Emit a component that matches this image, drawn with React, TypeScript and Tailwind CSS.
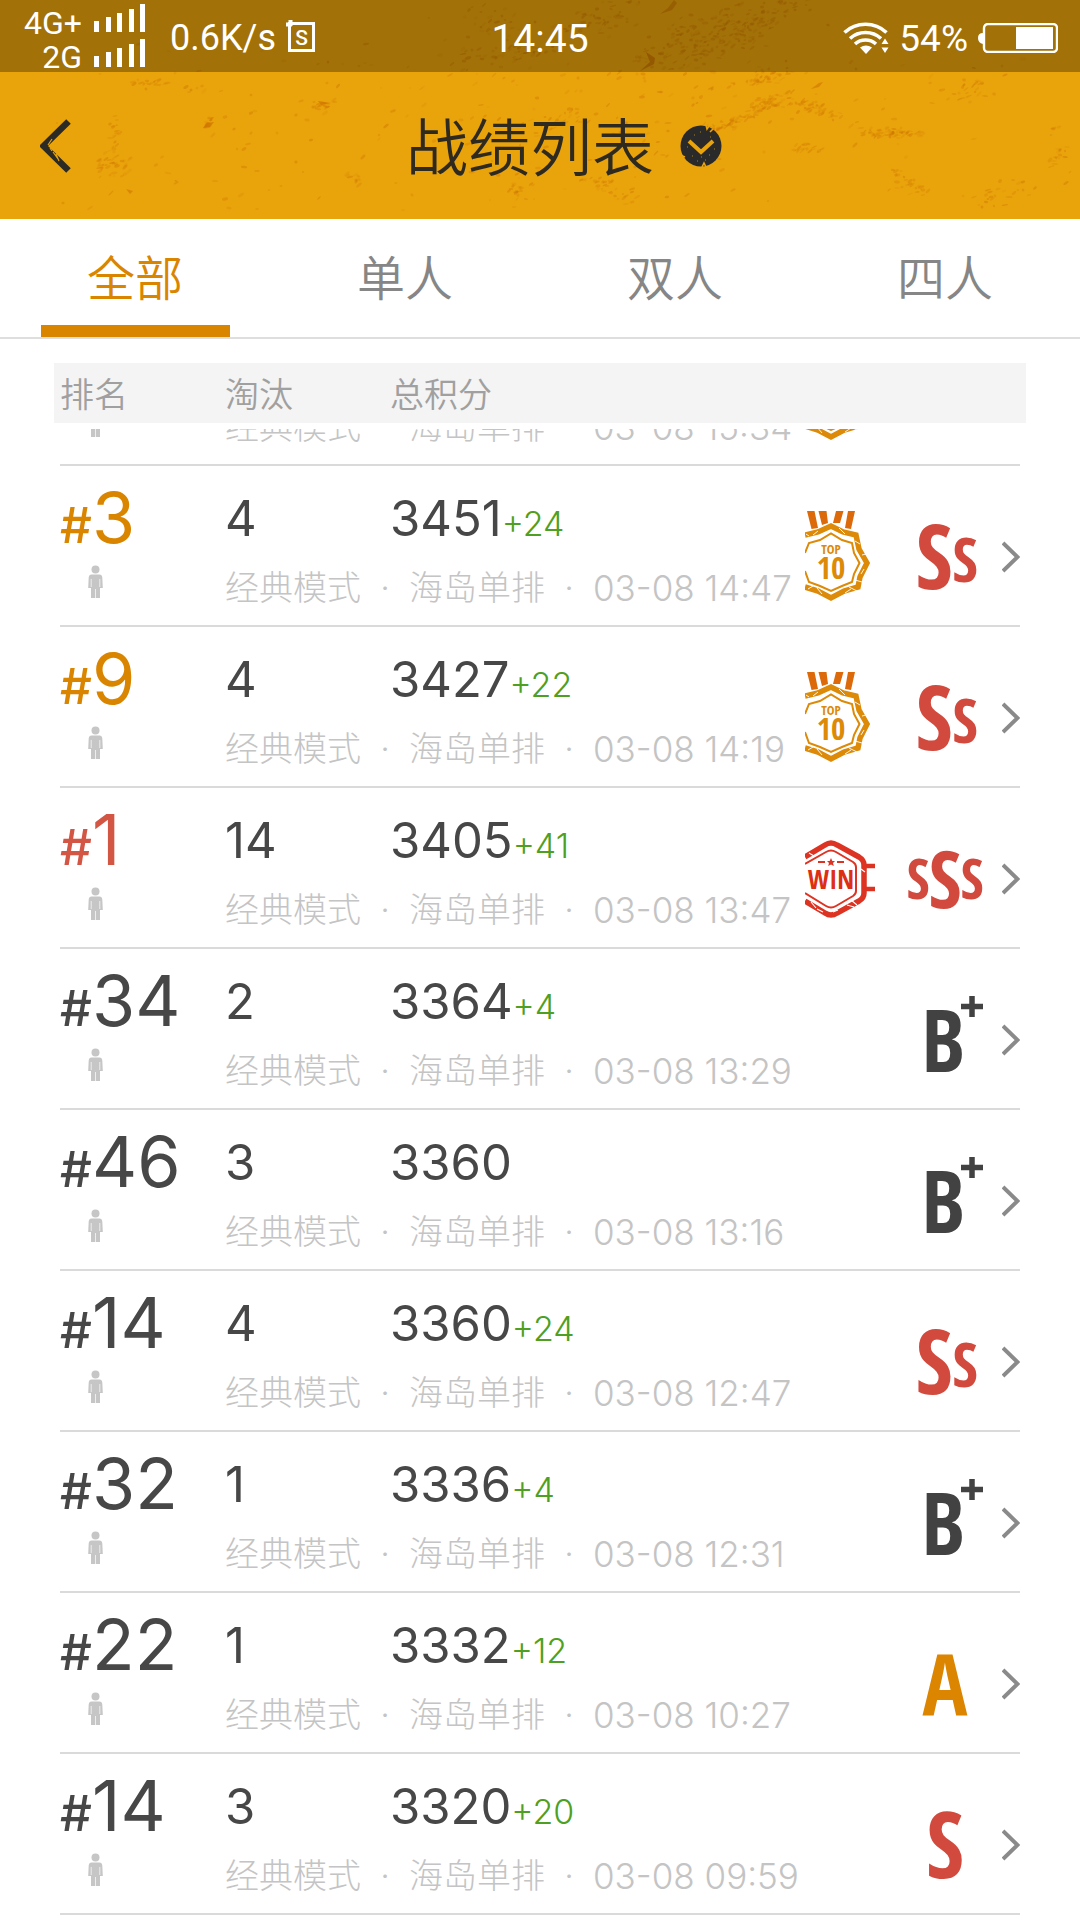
import React from "react";

type Badge = "top10" | "win";
type Grade = "SSS" | "SS" | "S" | "A" | "B+";

interface Match {
  rank?: number;
  kills?: number;
  score?: number;
  delta?: string;
  time: string;
  badge?: Badge;
  grade: Grade;
}

const matches: Match[] = [
  { time: "03-08 15:34", badge: "top10", grade: "SS" },
  { rank: 3, kills: 4, score: 3451, delta: "+24", time: "03-08 14:47", badge: "top10", grade: "SS" },
  { rank: 9, kills: 4, score: 3427, delta: "+22", time: "03-08 14:19", badge: "top10", grade: "SS" },
  { rank: 1, kills: 14, score: 3405, delta: "+41", time: "03-08 13:47", badge: "win", grade: "SSS" },
  { rank: 34, kills: 2, score: 3364, delta: "+4", time: "03-08 13:29", grade: "B+" },
  { rank: 46, kills: 3, score: 3360, time: "03-08 13:16", grade: "B+" },
  { rank: 14, kills: 4, score: 3360, delta: "+24", time: "03-08 12:47", grade: "SS" },
  { rank: 32, kills: 1, score: 3336, delta: "+4", time: "03-08 12:31", grade: "B+" },
  { rank: 22, kills: 1, score: 3332, delta: "+12", time: "03-08 10:27", grade: "A" },
  { rank: 14, kills: 3, score: 3320, delta: "+20", time: "03-08 09:59", grade: "S" },
];

const tabs = ["全部", "单人", "双人", "四人"];

/* Worn paint: clusters of small marks, [centre x, centre y, spread x, spread y, slope, count] */
const clusters: number[][] = [
  [700, 40, 70, 30, -0.4, 150],
  [760, 20, 60, 18, -0.5, 90],
  [725, 125, 28, 7, -0.2, 45],
  [765, 105, 30, 10, -0.4, 60],
  [815, 108, 28, 7, 0.25, 45],
  [890, 133, 36, 6, 0, 60],
  [760, 78, 40, 12, -0.3, 50],
  [600, 20, 60, 22, -0.3, 60],
  [560, 120, 30, 8, -0.4, 25],
  [610, 190, 30, 14, 0.3, 30],
  [805, 148, 16, 5, 0, 14],
  [910, 185, 22, 12, 0.4, 24],
  [500, 55, 60, 16, -0.1, 40],
  [490, 20, 30, 18, 0, 25],
  [110, 165, 28, 14, 0.1, 36],
  [115, 135, 8, 28, 0, 20],
  [160, 86, 60, 6, 0.1, 24],
  [320, 105, 20, 6, 0.1, 14],
  [207, 124, 6, 5, -0.8, 16],
  [520, 190, 14, 20, 0.3, 20],
  [355, 180, 16, 8, 0.2, 10],
  [970, 90, 40, 16, -0.3, 26],
  [1000, 195, 40, 16, -0.2, 26],
  [1060, 150, 14, 40, 0, 22],
  [540, 110, 540, 110, 0, 260],
];

function makeSpeckles() {
  let seed = 7;
  const rnd = () => {
    seed = (seed * 16807) % 2147483647;
    return seed / 2147483647;
  };
  const out: { x: number; y: number; rx: number; ry: number; a: number; o: number }[] = [];
  clusters.forEach(([cx, cy, sx, sy, slope, n]) => {
    for (let i = 0; i < n; i++) {
      const u = rnd() + rnd() - 1;
      const v = rnd() + rnd() - 1;
      out.push({
        x: Math.round(cx + u * sx),
        y: Math.round(cy + v * sy + u * sx * slope),
        rx: 1 + rnd() * 2.4,
        ry: 0.6 + rnd() * 1,
        a: Math.round(-50 + rnd() * 60),
        o: 0.1 + rnd() * 0.34,
      });
    }
  });
  return out;
}

const speckles = makeSpeckles();

function Grunge() {
  return (
    <svg className="absolute inset-0 h-full w-full" viewBox="0 0 1080 219" preserveAspectRatio="xMidYMid slice" aria-hidden="true">
      {speckles.map((s, i) => (
        <ellipse key={i} cx={s.x} cy={s.y} rx={s.rx} ry={s.ry} fill="#cf7400" opacity={s.o} transform={`rotate(${s.a} ${s.x} ${s.y})`} />
      ))}
      <path d="M640 71 L650 62 L646 52 L655 58 L654 64 Z" fill="#cf7400" opacity="0.8" />
      <path d="M660 14 L668 8 L674 0 L677 3 L672 10 Z" fill="#cf7400" opacity="0.6" />
      <path d="M203 128 L207 123 L214 122 L210 127 Z" fill="#cf7400" opacity="0.7" />
      <path d="M318 101 L331 103 L321 105 Z" fill="#cf7400" opacity="0.7" />
      <path d="M811 89 L819 83 L823 82 L819 87 Z" fill="#cf7400" opacity="0.6" />
      <path d="M126 189 L133 191 L130 194 Z" fill="#cf7400" opacity="0.6" />
    </svg>
  );
}

function SignalBars() {
  return (
    <svg className="block h-7 w-[52px]" viewBox="0 0 52 28" fill="#fff" aria-hidden="true">
      <rect x="0" y="17" width="5" height="11" />
      <rect x="12" y="13" width="5" height="15" />
      <rect x="23" y="9" width="5" height="19" />
      <rect x="35" y="5" width="5" height="23" />
      <rect x="46" y="0" width="5" height="28" />
    </svg>
  );
}

function StatusBar() {
  return (
    <div className="relative grid h-[72px] grid-cols-[1fr_auto_1fr] bg-black/30 pr-[22px] pl-[22px] font-['Roboto','Noto_Sans_CJK_SC',sans-serif] text-white">
      <div className="flex">
        <div className="w-[60px] pt-1.5 text-right text-[32px] leading-[34px]">
          <div>4G+</div>
          <div>2G</div>
        </div>
        <div className="ml-3 flex flex-col gap-[7px] pt-1">
          <SignalBars />
          <SignalBars />
        </div>
        <div className="ml-6 pt-0.5 text-[36px] leading-[72px]">0.6K/s</div>
        <svg className="mt-5 ml-2.5 h-8 w-[30px]" viewBox="0 0 30 32" fill="none" stroke="#fff" strokeWidth="3" aria-hidden="true">
          <path d="M3.500 3.500H27.500V30.500H3.500Z" />
          <path d="M0 4.500H6M4.500 0V6" strokeWidth="4" />
          <text x="15.500" y="24.500" textAnchor="middle" fontSize="21" fontWeight="500" fill="#fff" stroke="none">S</text>
        </svg>
      </div>
      <div className="pt-0.5 text-[39px] leading-[74px]">14:45</div>
      <div className="flex items-center justify-end">
        <svg className="h-8 w-[46px]" viewBox="0 0 46 32" fill="none" stroke="#fff" strokeWidth="3.600" aria-hidden="true">
          <path d="M1.500 10.500A31 31 0 0 1 43.500 10.500" />
          <path d="M7 16.500A23 23 0 0 1 38 16.500" />
          <path d="M12 22A16 16 0 0 1 33 22" />
          <path d="M17 25.500Q23 21.500 29 25.500L23 32Z" fill="#fff" stroke="none" />
          <path d="M42 16.500L45.500 22H38.500ZM42 31L45.500 25.500H38.500Z" fill="#fff" stroke="none" />
        </svg>
        <span className="ml-2.5 pt-0.5 text-[37px] leading-[72px]">54%</span>
        <svg className="ml-2.5 h-[30px] w-20" viewBox="0 0 80 30" fill="none" aria-hidden="true">
          <path d="M5 10Q0 10 0 15T5 21Z" fill="#fff" />
          <rect x="6" y="1" width="73" height="28" rx="4" stroke="#fff" strokeWidth="2.400" />
          <rect x="38" y="4" width="37" height="22" fill="#fff" />
        </svg>
      </div>
    </div>
  );
}

function TitleBar() {
  return (
    <header className="relative flex h-[147px] items-center pr-6 pl-10 text-[#2e2a20]">
      <button type="button" aria-label="返回" className="h-14 w-8">
        <svg className="h-14 w-8" viewBox="0 0 32 56" fill="none" aria-hidden="true">
          <path d="M28.500 3.500L3.500 28L28.500 52.500" stroke="#2b2a24" strokeWidth="6.500" />
          <path d="M8 27L12 21M13 34L18 41M16 36L19 43M10 30L12 33" stroke="#e9a30b" strokeWidth="1.200" />
        </svg>
      </button>
      <div className="flex flex-1 items-center justify-center gap-[26px]">
        <h1 className="pb-1 font-['Noto_Sans_CJK_SC',sans-serif] text-[62px] leading-[76px] font-[350]">战绩列表</h1>
        <button type="button" aria-label="选择列表" className="h-[42px] w-[42px]">
          <svg className="h-[42px] w-[42px]" viewBox="0 0 42 42" aria-hidden="true">
            <circle cx="21" cy="21" r="20.500" fill="#2b2a2a" />
            <path d="M9 16L21 27L33 16" fill="none" stroke="#e9a30b" strokeWidth="4" />
            <path d="M26 0L27 4L29 1M0 30L5 32M22 42L24 38L26 42M33 4L30 7" fill="none" stroke="#e9a30b" strokeWidth="1.600" />
            <path d="M14 10h1M20 7h1M29 30h1M12 31h1M25 35h1M17 36h1M34 24h1M7 22h1M21 32h1M30 12h1" stroke="#80651f" strokeWidth="1.500" />
          </svg>
        </button>
      </div>
    </header>
  );
}

function Tabs() {
  return (
    <nav className="grid grid-cols-4 border-b-2 border-[#dedede]" role="tablist">
      {tabs.map((t, i) => (
        <button
          key={t}
          type="button"
          role="tab"
          aria-selected={i === 0}
          className={
            i === 0
              ? "flex flex-col items-center text-[#da8500]"
              : "flex flex-col items-center text-[#868686]"
          }
        >
          <span className="pt-1.5 font-['Noto_Sans_CJK_SC',sans-serif] text-[48px] leading-[100px] font-[350]">{t}</span>
          <span className={i === 0 ? "h-3 w-[70%] bg-[#da8500]" : "h-3 w-[70%]"} />
        </button>
      ))}
    </nav>
  );
}

function Person() {
  return (
    <svg className="ml-7 block h-[34px] w-[15px]" viewBox="0 0 15 34" fill="#c6c6c6" aria-hidden="true">
      <circle cx="7.500" cy="4.500" r="4" />
      <path d="M3.500 9.500H11.500Q14 9.500 14.300 12.500L14.800 23H12V33H3V23H0.200L0.700 12.500Q1 9.500 3.500 9.500Z" />
      <path d="M3.200 14V22M11.800 14V22M7.500 24V33" stroke="#fff" strokeWidth="0.700" />
    </svg>
  );
}

function TopTen() {
  return (
    <svg className="h-[92px] w-[72px]" viewBox="0 0 72 92" fill="none" aria-hidden="true">
      <path d="M2 0H9.500L13 17L6.500 18ZM13.500 0H21.500L23 12L17 14ZM31 0H38.500L35 12H28ZM43 0H50L46 18L40 17Z" fill="#dd6a0a" />
      <g stroke="#dc8a08">
        <path d="M0 24L13 21L26 15L38 21L51 24L54 38L62 52L55 66L53 76L39 80L26 87L13 80L0 76" strokeWidth="5.500" />
        <path d="M0 42L4 32L15 29L26 22.500L37 29L47 32L49 42L54.500 52L49 63L47 71L37 75L26 80L15 75L4 71L0 60" strokeWidth="2" />
      </g>
      <path d="M8 24L13 20M34 17L40 23M50 30L55 33M57 44L61 43M50 69L57 71M40 82L46 78M44 76L52 80M12 77L17 83M3 78L8 75M1 23L4 25M59 58L56 63" stroke="#fff" strokeWidth="0.900" />
      <g fill="#dc8a08" textAnchor="middle" className="font-['Open_Sans_Condensed','Open_Sans',sans-serif] font-bold">
        <text x="26" y="43" fontSize="13">TOP</text>
        <text x="26" y="68" fontSize="31">10</text>
      </g>
    </svg>
  );
}

function Win() {
  return (
    <svg className="h-20 w-[72px]" viewBox="0 0 72 80" fill="none" stroke="#dd3322" aria-hidden="true">
      <path d="M0 18L20 6Q26 2 32 6L54 18Q59 21 59 26V54Q59 59 54 62L32 74Q26 78 20 74L0 62" strokeWidth="5.500" />
      <path d="M0 25L21 13Q26 10 31 13L48 23Q51 25 51 28V52Q51 55 48 57L31 67Q26 70 21 67L0 54" strokeWidth="2" />
      <path d="M61 27H70M61 50H70" strokeWidth="4.500" />
      <path d="M13 23H20M32 23H39" strokeWidth="2" />
      <path d="M26 19L27.300 22H30L28 24L28.800 27L26 25.400L23.200 27L24 24L22 22H24.700Z" fill="#dd3322" stroke="none" />
      <path d="M6 63L11 69M12 70L18 73M42 66L49 68M46 61L52 66M28 73L33 71M4 14L9 17M56 30L60 33" stroke="#fff" strokeWidth="1.100" />
      <text x="26" y="50" fontSize="27" textAnchor="middle" fill="#dc2f14" stroke="none" className="font-['Open_Sans_Condensed','Open_Sans',sans-serif] font-bold">WIN</text>
    </svg>
  );
}

const gradeParts: Record<Grade, { ch: string; x: number; y: number; size: number }[]> = {
  SSS: [
    { ch: "S", x: 13, y: 65, size: 56 },
    { ch: "S", x: 40, y: 74, size: 80 },
    { ch: "S", x: 67, y: 65, size: 56 },
  ],
  SS: [
    { ch: "S", x: 29, y: 77, size: 90 },
    { ch: "S", x: 60, y: 70, size: 62 },
  ],
  S: [{ ch: "S", x: 40, y: 78, size: 92 }],
  A: [{ ch: "A", x: 40, y: 76, size: 84 }],
  "B+": [{ ch: "B", x: 38, y: 77, size: 86 }],
};

const gradeFill: Record<Grade, string> = {
  SSS: "#d24a3e",
  SS: "#d24a3e",
  S: "#d24a3e",
  A: "#dc8500",
  "B+": "#424242",
};

function GradeMark({ grade }: { grade: Grade }) {
  return (
    <svg className="h-[90px] w-20 overflow-visible" viewBox="0 0 80 90" aria-label={grade} role="img">
      <g fill={gradeFill[grade]} textAnchor="middle" className="font-['Open_Sans_Condensed','Open_Sans',sans-serif] font-bold">
        {gradeParts[grade].map((p, i) => (
          <text key={i} x={p.x} y={p.y} fontSize={p.size}>{p.ch}</text>
        ))}
      </g>
      {grade === "B+" && (
        <path d="M67 1V22M56 11.500H78" stroke={gradeFill[grade]} strokeWidth="5.500" />
      )}
    </svg>
  );
}

function rankColor(rank: number) {
  if (rank === 1) return "text-[#d35645]";
  if (rank <= 10) return "text-[#da8500]";
  return "text-[#474747]";
}

function Row({ m }: { m: Match }) {
  return (
    <li className="border-b-2 border-[#dadada]">
      <a href="#match" className="grid h-[159px] grid-cols-[165px_1fr_auto]">
        <div className="pt-0.5">
          <div className={m.rank ? rankColor(m.rank) : ""}>
            <div className="h-[97px] text-[70px] leading-[100px] whitespace-nowrap">
              {m.rank && (
                <>
                  <span className="text-[50px] font-medium">#</span>
                  {m.rank}
                </>
              )}
            </div>
          </div>
          <Person />
        </div>
        <div>
          <div className="grid h-[102px] grid-cols-[165px_1fr] text-[49px] leading-[106px] text-[#474747]">
            <span>{m.kills}</span>
            <span className="whitespace-nowrap">
              {m.score}
              {m.delta && <span className="text-[34px] font-light text-[#4f9f22]">{m.delta}</span>}
            </span>
          </div>
          <div className="flex text-[34px] leading-[40px] font-light whitespace-nowrap text-[#c4c4c4]">
            <span>经典模式</span>
            <span className="w-12 text-center">·</span>
            <span>海岛单排</span>
            <span className="w-12 text-center">·</span>
            <span className="text-[35px]">{m.time}</span>
          </div>
        </div>
        <div className="flex w-[215px] items-center pt-[22px]">
          {m.badge === "top10" && <TopTen />}
          {m.badge === "win" && <Win />}
          <div className="ml-auto flex items-center gap-[17px]">
            <GradeMark grade={m.grade} />
            <svg className="h-8 w-[18px]" viewBox="0 0 18 32" fill="none" stroke="#8a8a8a" strokeWidth="4" aria-hidden="true">
              <path d="M1 2L15.500 16L1 30" />
            </svg>
          </div>
        </div>
      </a>
    </li>
  );
}

export default function App() {
  return (
    <div className="min-h-screen bg-white font-['Inter','Noto_Sans_CJK_SC',sans-serif]">
      <div className="relative overflow-hidden bg-[#e9a30b]">
        <Grunge />
        <StatusBar />
        <TitleBar />
      </div>
      <Tabs />
      <main className="pt-6">
        <div className="mx-[54px] grid h-[60px] grid-cols-[165px_165px_1fr] items-center bg-[#f4f4f4] pl-1.5 font-['Noto_Sans_CJK_SC',sans-serif] text-[34px] leading-[56px] font-[350] text-[#a0a0a0]">
          <span>排名</span>
          <span>淘汰</span>
          <span>总积分</span>
        </div>
        <div className="mx-[60px] mt-1.5 overflow-hidden">
          <ul className="-mt-[124px]">
            {matches.map((m, i) => (
              <Row key={i} m={m} />
            ))}
          </ul>
        </div>
      </main>
    </div>
  );
}
